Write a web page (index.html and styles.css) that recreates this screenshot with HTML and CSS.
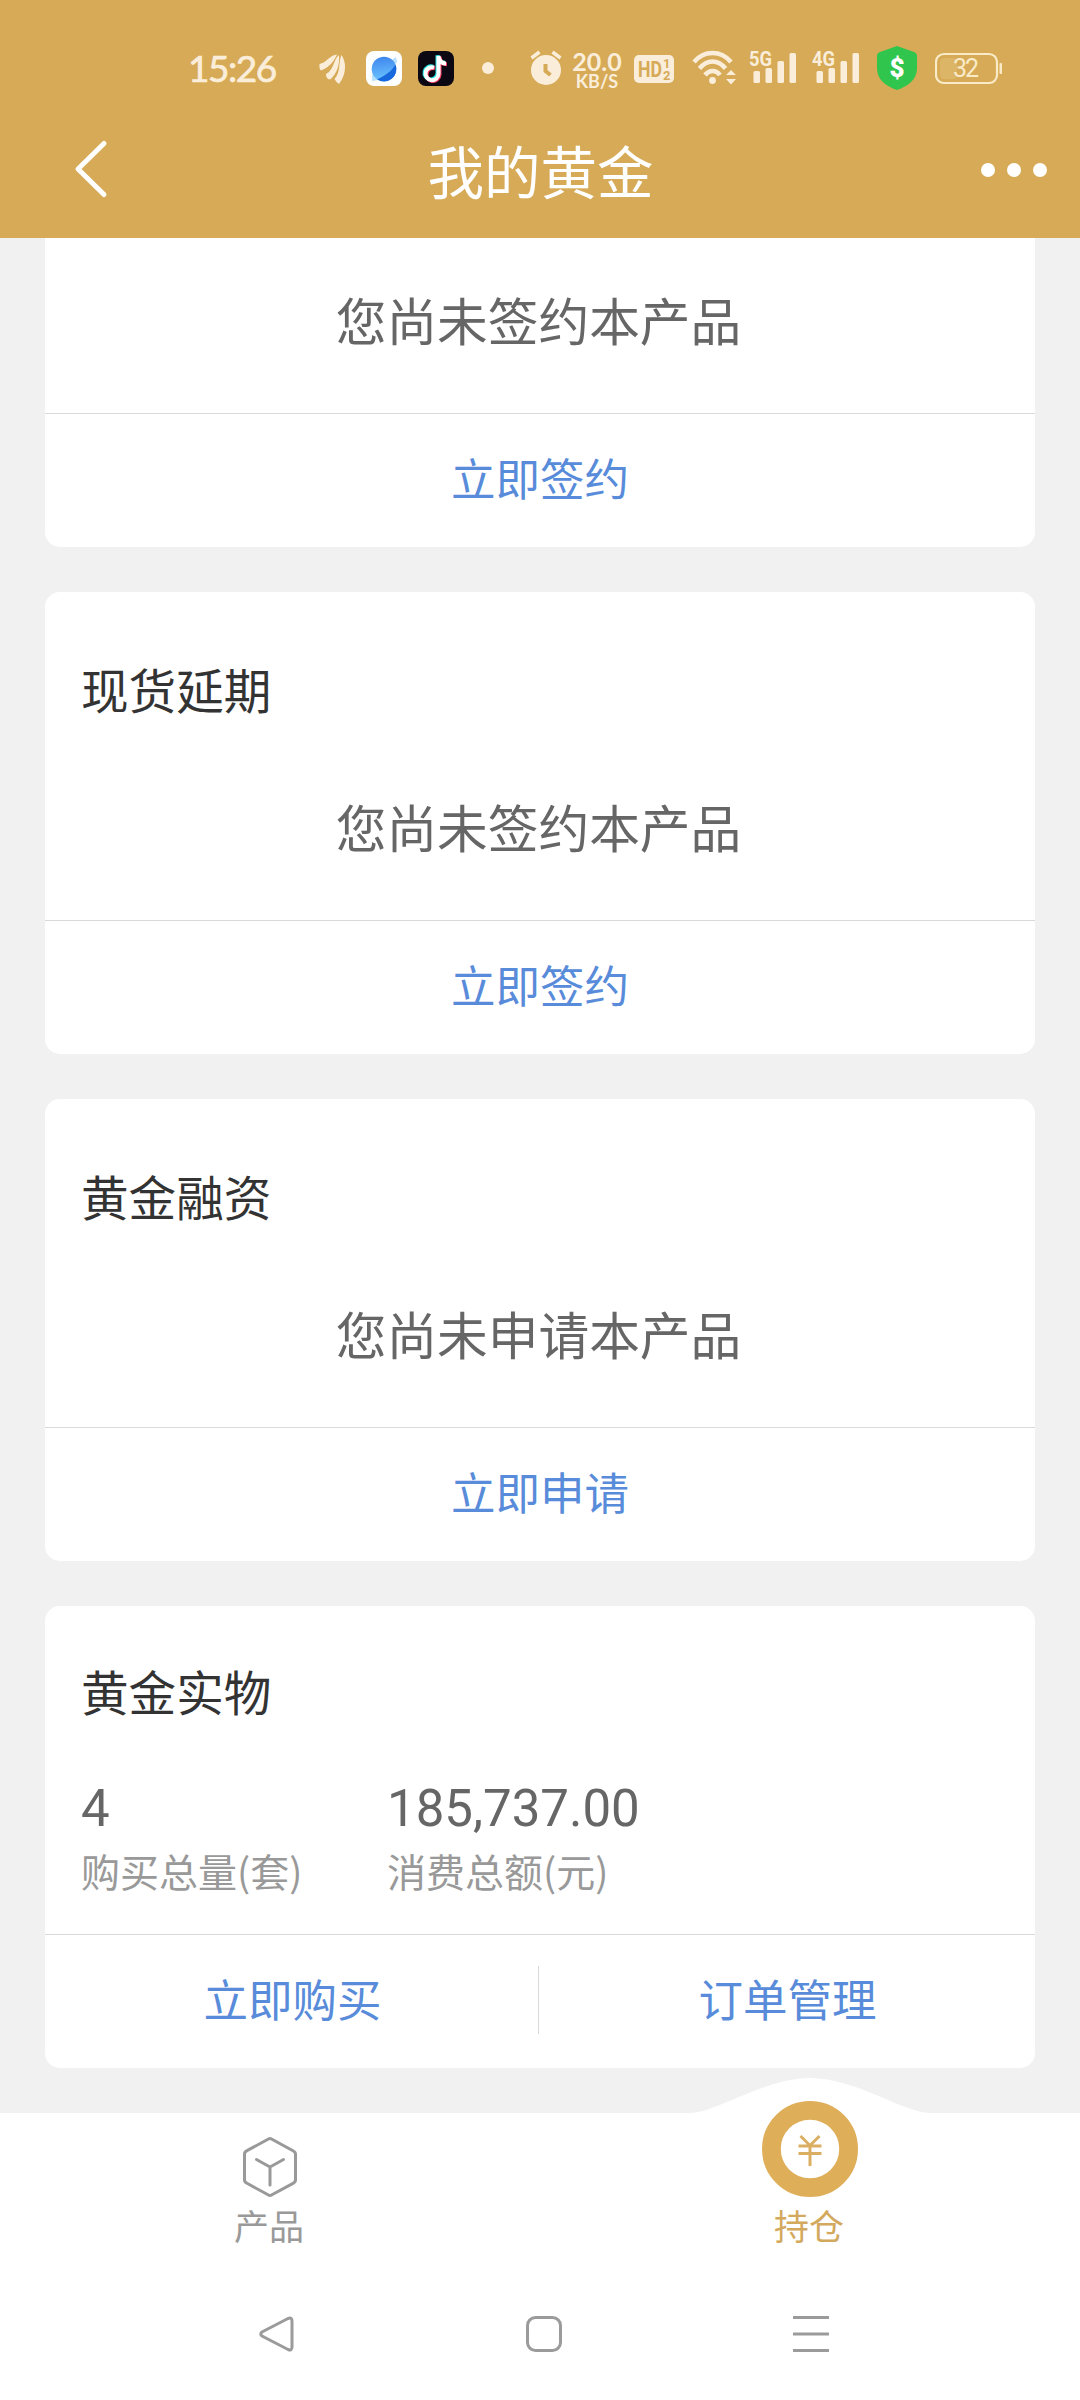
FILE: index.html
```html
<!DOCTYPE html>
<html lang="zh-CN">
<head>
    <meta charset="UTF-8">
    <meta name="viewport" content="width=device-width, initial-scale=1.0">
    <title>我的黄金</title>
    <link rel="stylesheet" href="styles.css">
</head>
<body>

    <header class="header">
        <!-- Status bar -->
        <div class="status-bar">
            <span class="time">15:26</span>
            <svg class="leaf" width="28" height="44" viewBox="0 0 28 44" fill="#faeedb">
                <path d="M1.500 18C8 17 12 9 19 8.500C16 15 12 21 3 24.500Q1 23 1.500 18Z"/>
                <path d="M21 9C22 18 19 28 12 33.500Q8 33 8 28C16 24 15 14 21 9Z"/>
                <path d="M23.500 9C29 17 28 29 21 38Q18 36 16.500 33C23 26 20 17 23.500 9Z"/>
            </svg>
            <svg class="browser" width="36" height="44" viewBox="0 0 36 44">
                <defs>
                    <linearGradient id="planet" x1="0.3" y1="0" x2="0.4" y2="1">
                        <stop offset="0" stop-color="#3f86ee"/>
                        <stop offset="1" stop-color="#6cc6ff"/>
                    </linearGradient>
                </defs>
                <rect y="5" width="36" height="35" rx="8" fill="#fdfefe"/>
                <path d="M30 11L31 16L23 26L12 34L6 35L6 29Z" fill="#b6e0fb"/>
                <circle cx="18" cy="23" r="12.3" fill="url(#planet)"/>
                <path d="M29.500 18.500A12.300 12.300 0 0 1 11 33.200C19 30 26 25 29.500 18.500Z" fill="#1768dc"/>
            </svg>
            <svg class="tiktok" width="36" height="44" viewBox="0 0 36 44" fill="none" stroke-width="4">
                <rect y="5" width="36" height="35" rx="8" fill="#0b0813"/>
                <path d="M16 21.500A6.500 6.500 0 1 0 20.500 28V10C21 15 24 17.500 28 17.500" stroke="#27e4e4" transform="translate(-1 -0.8)"/>
                <path d="M16 21.500A6.500 6.500 0 1 0 20.500 28V10C21 15 24 17.500 28 17.500" stroke="#f43c62" transform="translate(1 0.8)"/>
                <path d="M16 21.500A6.500 6.500 0 1 0 20.500 28V10C21 15 24 17.500 28 17.500" stroke="#fff"/>
            </svg>
            <span class="more-dot"></span>
            <svg class="alarm" width="34" height="44" viewBox="0 0 34 44">
                <circle cx="17" cy="24" r="15" fill="#faeedb"/>
                <path d="M2.500 12L10.500 6M31.500 12L23.500 6" stroke="#faeedb" stroke-width="3.500"/>
                <path d="M16.500 18V25L21.500 29" fill="none" stroke="#d6aa56" stroke-width="4"/>
            </svg>
            <span class="speed"><b>20.0</b><b class="unit">KB/S</b></span>
            <svg class="hd" width="40" height="44" viewBox="0 0 40 44">
                <rect y="9" width="40" height="28" rx="5" fill="#faeedb"/>
                <g fill="#d6aa56" font-family="Roboto, sans-serif" font-weight="700">
                    <text x="4" y="31" font-size="22" textLength="24" lengthAdjust="spacingAndGlyphs">HD</text>
                    <text x="29" y="22" font-size="13">1</text>
                    <text x="29" y="34" font-size="13">2</text>
                </g>
            </svg>
            <svg class="wifi" width="46" height="44" viewBox="0 0 46 44" fill="none" stroke="#faeedb" stroke-width="4.500">
                <path d="M3 16C13 4 30 4 40 16M8.500 22.500C16 13 27 13 34.500 22.500M14 29C18.500 23.500 25 23.500 29 29"/>
                <circle cx="21.500" cy="34.500" r="3.400" fill="#faeedb" stroke="none"/>
                <path d="M35 29L40 24L45 29ZM35 33H45L40 38.500Z" fill="#faeedb" stroke="none"/>
            </svg>
            <svg class="signal-5g" width="48" height="44" viewBox="0 0 48 44" fill="#faeedb">
                <text x="0" y="20" font-size="21" font-weight="700" font-family="Roboto, sans-serif" textLength="23" lengthAdjust="spacingAndGlyphs">5G</text>
                <rect x="4.500" y="25" width="6.500" height="12" rx="1.500"/>
                <rect x="16.500" y="22" width="6.500" height="15" rx="1.500"/>
                <rect x="28.500" y="15" width="6.500" height="22" rx="1.500"/>
                <rect x="40.500" y="7" width="6.500" height="30" rx="1.500"/>
            </svg>
            <svg class="signal-4g" width="48" height="44" viewBox="0 0 48 44" fill="#faeedb">
                <text x="0" y="20" font-size="21" font-weight="700" font-family="Roboto, sans-serif" textLength="23" lengthAdjust="spacingAndGlyphs">4G</text>
                <rect x="4.500" y="25" width="6.500" height="12" rx="1.500"/>
                <rect x="16.500" y="22" width="6.500" height="15" rx="1.500"/>
                <rect x="28.500" y="15" width="6.500" height="22" rx="1.500"/>
                <rect x="40.500" y="7" width="6.500" height="30" rx="1.500"/>
            </svg>
            <svg class="shield" width="40" height="44" viewBox="0 0 40 44">
                <path d="M20 0L37 6Q40 7 40 10V22C40 34 31 40 20 44C9 40 0 34 0 22V10Q0 7 3 6Z" fill="#30c64d"/>
                <text x="20" y="31" font-size="26" font-weight="900" font-family="Roboto, sans-serif" text-anchor="middle" fill="#fff">$</text>
            </svg>
            <svg class="battery" width="68" height="44" viewBox="0 0 68 44">
                <rect x="1" y="8" width="61" height="29" rx="8" fill="none" stroke="#faebc8" stroke-width="2.200"/>
                <rect x="5" y="12" width="17" height="21" rx="4" fill="#dcb566"/>
                <rect x="64.500" y="17" width="2.500" height="11" rx="1" fill="#faebc8"/>
                <text x="31" y="31" font-size="25" font-family="Roboto, sans-serif" text-anchor="middle" fill="#faebc8" textLength="26">32</text>
            </svg>
        </div>

        <!-- Title bar -->
        <div class="title-bar">
            <svg class="back" width="36" height="60" viewBox="0 0 36 60" fill="none" stroke="#fff" stroke-width="5" stroke-linecap="round" stroke-linejoin="round">
                <path d="M31 4.500L5 30L31 55.500"/>
            </svg>
            <h1>我的黄金</h1>
            <div class="menu-dots"><i></i><i></i><i></i></div>
        </div>
    </header>

    <main class="content">
        <section class="card card-clipped">
            <p class="message">您尚未签约本产品</p>
            <div class="actions"><a>立即签约</a></div>
        </section>

        <section class="card">
            <h2>现货延期</h2>
            <p class="message">您尚未签约本产品</p>
            <div class="actions"><a>立即签约</a></div>
        </section>

        <section class="card">
            <h2>黄金融资</h2>
            <p class="message">您尚未申请本产品</p>
            <div class="actions"><a>立即申请</a></div>
        </section>

        <section class="card card-physical">
            <h2>黄金实物</h2>
            <div class="stats">
                <div class="stat">
                    <div class="value">4</div>
                    <div class="label">购买总量(套)</div>
                </div>
                <div class="stat">
                    <div class="value">185,737.00</div>
                    <div class="label">消费总额(元)</div>
                </div>
            </div>
            <div class="actions"><a>立即购买</a><a>订单管理</a></div>
        </section>
    </main>

    <!-- Bottom tabs -->
    <nav class="tabs">
        <a class="tab">
            <svg width="60" height="64" viewBox="0 0 60 64" fill="none" stroke="#999" stroke-width="3" stroke-linecap="round" stroke-linejoin="round">
                <path d="M28.500 4Q30 3 31.500 4L53 15.700Q55.500 17 55.500 19V45Q55.500 47 53 48.300L31.500 60Q30 61 28.500 60L7 48.300Q4.500 47 4.500 45V19Q4.500 17 7 15.700Z"/>
                <path d="M16.500 24.500L30 32L43.500 24.500M30 32V50"/>
            </svg>
            <span>产品</span>
        </a>
        <a class="tab active">
            <svg class="bump" width="240" height="37" viewBox="0 0 240 37" fill="#fff">
                <path d="M0 36C25 36 75 1 120 1S215 36 240 36V37H0Z"/>
            </svg>
            <svg class="coin" width="96" height="96" viewBox="0 0 96 96" fill="none">
                <circle cx="48" cy="48" r="38.600" stroke="#dfae59" stroke-width="18.800"/>
                <path d="M38.500 35L48 44.500L57.500 35M36.500 45H59.500M36.500 52.500H59.500M48 45V65" stroke="#dbaf62" stroke-width="3"/>
            </svg>
            <span>持仓</span>
        </a>
    </nav>

    <!-- System navigation -->
    <div class="system-nav">
        <svg width="36" height="36" viewBox="0 0 36 36"><path d="M29 2.500L3 16Q0.500 18 3 20L29 33.500Q33 35 33 31V5Q33 1 29 2.500Z"/></svg>
        <svg width="36" height="36" viewBox="0 0 36 36"><rect x="1.500" y="1.500" width="33" height="33" rx="8"/></svg>
        <svg width="36" height="36" viewBox="0 0 36 36"><path d="M0 1.500H36M0 18H36M0 34.500H36"/></svg>
    </div>

</body>
</html>
```

FILE: styles.css
```css
* {
    box-sizing: border-box;
}

body {
    width: 1080px;
    height: 2400px;
    margin: 0;
    display: flex;
    flex-direction: column;
    overflow: hidden;
    background: #f1f1f1;
    font-family: "Noto Sans CJK SC", sans-serif;
}

h1, h2, p {
    margin: 0;
    font-weight: 400;
}

svg {
    display: block;
    flex: none;
}

/* Header */
.header {
    height: 238px;
    flex: none;
    background: #d6aa56;
    color: #fff;
}

.status-bar {
    display: flex;
    align-items: center;
    height: 136px;
    padding-left: 188px;
    color: #faeedb;
    font-family: Lato, sans-serif;
}

.time {
    width: 92px;
    font-size: 37px;
    line-height: 44px;
    letter-spacing: -1.5px;
    white-space: nowrap;
    -webkit-text-stroke: 0.7px #faeedb;
}

.leaf { margin-left: 38px; }
.browser { margin-left: 20px; }
.tiktok { margin-left: 16px; }
.alarm { margin-left: 35px; }
.hd { margin-left: 10px; }
.wifi { margin-left: 17px; }
.signal-5g { margin-left: 12px; }
.signal-4g { margin-left: 15px; }
.shield { margin-left: 17px; }
.battery { margin-left: 18px; }

.more-dot {
    width: 12px;
    height: 12px;
    margin-left: 28px;
    border-radius: 50%;
    background: #faeedb;
}

.speed {
    display: flex;
    flex-direction: column;
    align-items: center;
    width: 54px;
    height: 44px;
    margin-left: 7px;
    padding-top: 4px;
    font-size: 25px;
    line-height: 22px;
}

.speed .unit {
    font-size: 18px;
    line-height: 18px;
}

.title-bar {
    display: flex;
    align-items: center;
    justify-content: space-between;
    height: 68px;
    padding: 0 33px 0 73px;
}

.back {
    margin-bottom: 3px;
}

.title-bar h1 {
    margin-left: -9px;
    font-size: 56.5px;
    line-height: 66px;
    margin-bottom: 2px;
}

.menu-dots {
    display: flex;
    gap: 12px;
}

.menu-dots i {
    width: 14px;
    height: 14px;
    border-radius: 50%;
    background: #fff;
}

/* Cards */
.content {
    display: flex;
    flex-direction: column;
    gap: 45px;
    height: 1875px;
    flex: none;
    padding: 0 45px;
    overflow: hidden;
}

.card {
    flex: none;
    height: 462px;
    border-radius: 15px;
    background: #fff;
}

.card-clipped {
    height: 322px;
    margin-top: -13px;
}

.card h2 {
    padding: 54px 36px 0;
    color: #333;
    font-size: 47.6px;
    line-height: 86px;
}

.message {
    padding-right: 3px;
    color: #666;
    font-size: 50.7px;
    line-height: 188px;
    text-align: center;
}

.actions {
    display: flex;
    height: 134px;
    border-top: 1px solid #d9d9d9;
}

.actions a {
    flex: 1;
    color: #588bd9;
    font-size: 44.5px;
    line-height: 126px;
    text-align: center;
}

.actions a + a::before {
    content: "";
    float: left;
    width: 1px;
    height: 68px;
    margin: 31px 0 0 -2px;
    background: #d9d9d9;
}

.card-physical h2 {
    padding-top: 42px;
}

.stats {
    display: flex;
    height: 200px;
    padding: 45px 36px 0;
}

.stat {
    width: 306px;
}

.value {
    color: #666;
    font-family: Roboto, sans-serif;
    font-size: 51px;
    line-height: 60px;
}

.label {
    margin-top: 1px;
    color: #999;
    font-size: 39px;
    line-height: 60px;
}

/* Bottom tabs */
.tabs {
    display: flex;
    height: 155px;
    flex: none;
    background: #fff;
}

.tab {
    position: relative;
    flex: 1;
    display: flex;
    flex-direction: column;
    align-items: center;
    padding-top: 22px;
    color: #999;
    font-size: 35px;
    line-height: 50px;
}

.tab span {
    margin-top: 1px;
    padding-right: 2px;
}

.tab.active {
    color: #d3a95d;
}

/* the raised part lies over the scrolling content */
.bump {
    position: absolute;
    top: -36px;
    left: 150px;
}

.coin {
    position: relative;
    margin-top: -34px;
}

.tab.active span {
    margin-top: 3px;
}

/* System navigation */
.system-nav {
    display: flex;
    gap: 231px;
    flex: 1;
    padding: 48px 0 0 259px;
    background: #fff;
}

.system-nav svg {
    fill: none;
    stroke: #9b9b9b;
    stroke-width: 3;
}
```
